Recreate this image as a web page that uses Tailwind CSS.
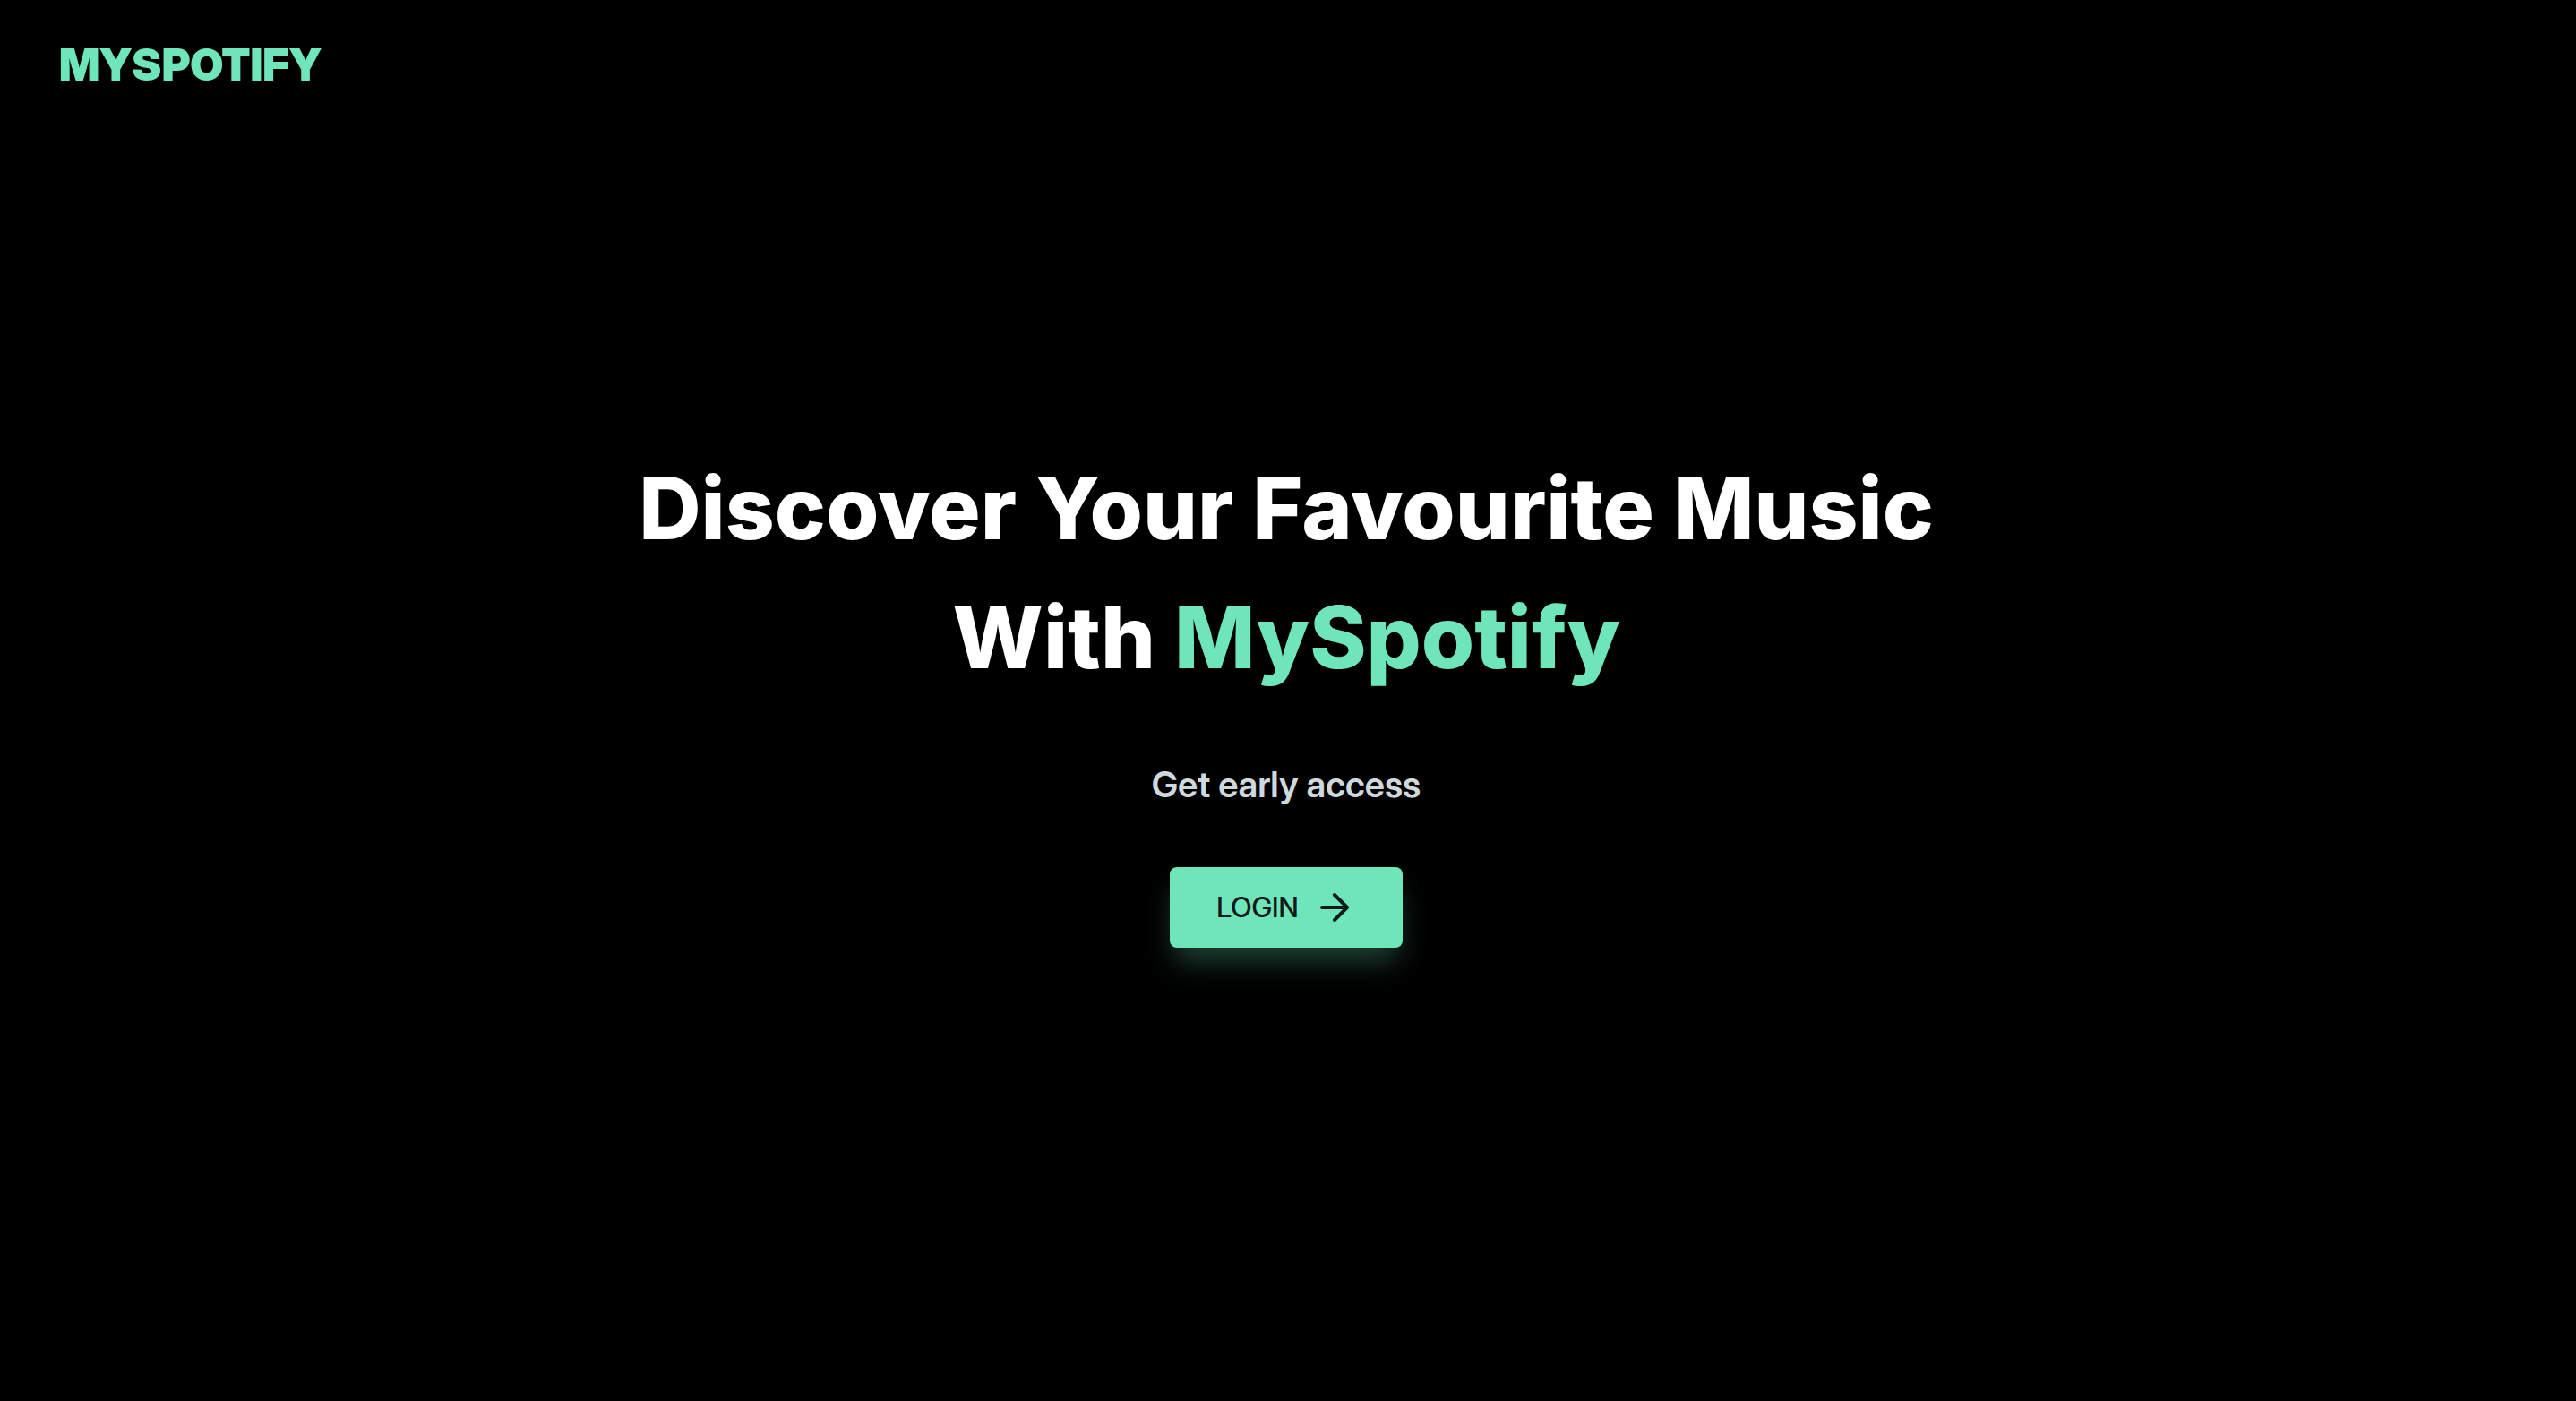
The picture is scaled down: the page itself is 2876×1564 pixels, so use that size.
<!DOCTYPE html>
<html lang="en">
<head>
<meta charset="utf-8">
<title>MySpotify</title>
<script src="https://cdn.jsdelivr.net/npm/@tailwindcss/browser@4"></script>
</head>
<body class="flex min-h-screen flex-col bg-black font-['Inter_Display','Inter',sans-serif] text-white">
  <header class="px-[66px] pt-[37px]">
    <a href="#" class="text-[49px] leading-[72px] font-black text-[#6fe6ba]">MYSPOTIFY</a>
  </header>
  <main class="flex flex-col items-center pt-[386px] pr-1 text-center">
    <h1 class="font-['Inter',sans-serif] text-8xl leading-[144px] font-extrabold">Discover Your Favourite Music<br>With <span class="text-[#6fe6ba]">MySpotify</span></h1>
    <p class="mt-16 text-[40px] leading-[57px] font-semibold text-[#cfd8dc]">Get early access</p>
    <button type="button" class="mt-16 flex items-center gap-4 rounded-lg bg-[#6fe6ba] px-13 py-5 text-[31px] leading-[50px] font-medium text-[#12191c] shadow-[0_20px_32px_-6px_#6fe6ba4d]">
      LOGIN
      <svg class="size-12" viewBox="0 0 24 24" fill="none" stroke="currentColor" stroke-width="2" stroke-linecap="round" stroke-linejoin="round" aria-hidden="true"><path d="M5 12h14M12 5l7 7-7 7"/></svg>
    </button>
  </main>
</body>
</html>
